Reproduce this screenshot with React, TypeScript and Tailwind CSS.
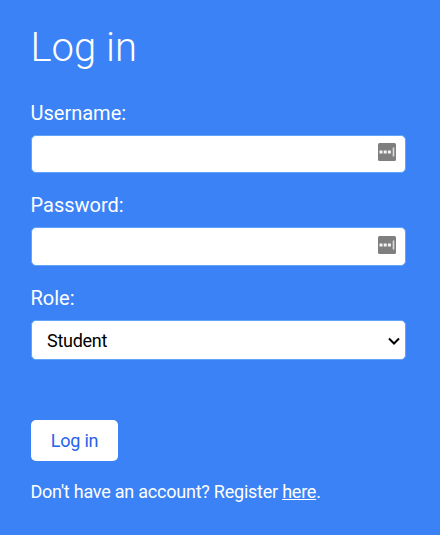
export default function App() {
  return (
    <main className="h-[535px] w-[440px] overflow-hidden bg-[#3b82f6] pl-[31px] pr-[34px] pt-6 font-['Roboto',sans-serif] text-white">
      <h1 className="-ml-[0.5px] h-12 text-[40px] font-light leading-[48px]">Log in</h1>
      <form className="mt-[26px]">
        <Field label="Username:" rowClass="h-[92px]" inputClass="h-[38px] pt-[7px]" />
        <Field label="Password:" rowClass="h-[93px]" inputClass="h-[39px] pt-2" />
        <div>
          <label className="-ml-[0.5px] block h-[30px] text-[20px] leading-[30px]">Role:</label>
          <div className="mt-[7px] flex h-10 items-center justify-between rounded-[5px] border border-[#60a5fa] bg-white pl-[15px] pr-[5px] text-[18px] tracking-[-0.28px] text-black">
            <span>Student</span>
            <svg className="mt-px" width="12" height="8" viewBox="0 0 12 8" fill="none" stroke="#000" strokeWidth="2">
              <path d="M1 1.5 6 6.5 11 1.5" />
            </svg>
          </div>
        </div>
        <button type="button" className="mt-[60px] flex h-[41px] w-[87px] items-center justify-center rounded-[5px] bg-white text-[18px] tracking-[-0.2px] text-[#2563eb]">
          Log in
        </button>
        <p className="-ml-[0.5px] mt-[17px] text-[18px] leading-[27px] tracking-[-0.23px]">
          Don't have an account? Register <a className="underline">here</a>.
        </p>
      </form>
    </main>
  );
}

function Field({ label, rowClass, inputClass }: { label: string; rowClass: string; inputClass: string }) {
  return (
    <div className={rowClass}>
      <label className="-ml-[0.5px] block h-[30px] text-[20px] leading-[30px]">{label}</label>
      <div className={`mt-[7px] flex items-start justify-end rounded-[5px] border border-[#60a5fa] bg-white pr-[9px] ${inputClass}`}>
        <svg width="18" height="18" viewBox="0 0 18 18">
          <rect width="18" height="18" rx="1.5" fill="#7f7f7f" />
          <path d="M1.5 7.5h3v3h-3zM5.7 7.5h3v3h-3zM9.9 7.5h3v3h-3z" fill="#f4f4f4" />
          <path d="M15.5 4.5v9" stroke="#dedede" strokeWidth="1.6" />
        </svg>
      </div>
    </div>
  );
}
